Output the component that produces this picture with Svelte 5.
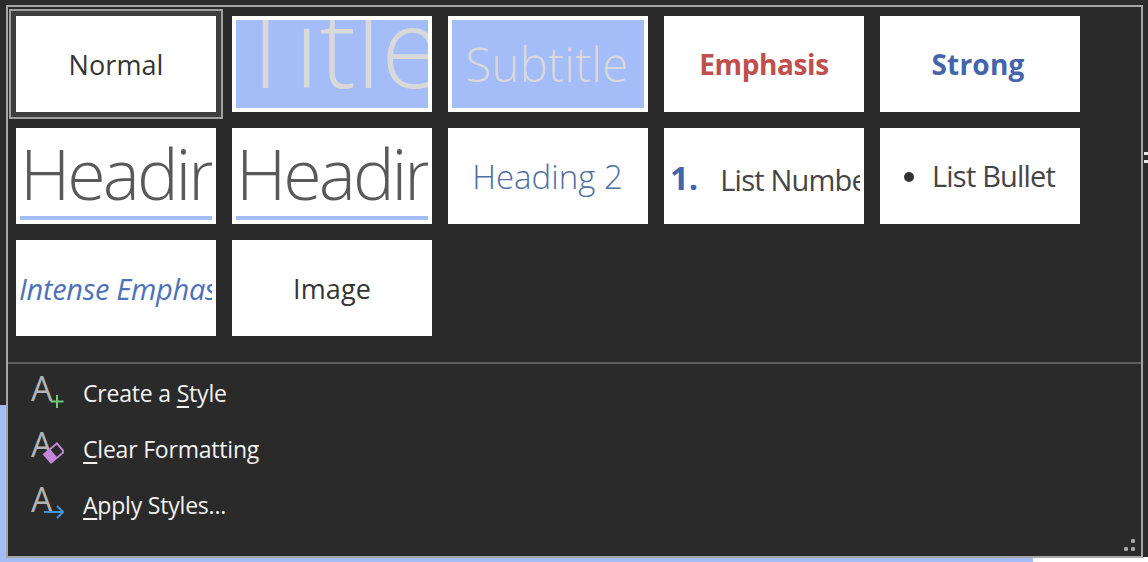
<script>
  const actions = [
    { before: 'Create a ', key: 'S', after: 'tyle', icon: 'add' },
    { before: '', key: 'C', after: 'lear Formatting', icon: 'clear' },
    { before: '', key: 'A', after: 'pply Styles...', icon: 'apply' }
  ];
</script>

<div class="page">
  <div class="panel">
    <div class="gallery">
      <div class="tile selected"><span class="normal">Normal</span></div>
      <div class="tile shaded"><div class="fill"><span class="title">Title</span></div></div>
      <div class="tile shaded"><div class="fill"><span class="subtitle">Subtitle</span></div></div>
      <div class="tile"><span class="emphasis">Emphasis</span></div>
      <div class="tile"><span class="strong">Strong</span></div>

      <div class="tile ruled"><div class="clip"><span class="heading">Heading 1</span></div></div>
      <div class="tile ruled"><div class="clip"><span class="heading">Heading 1</span></div></div>
      <div class="tile"><span class="heading2">Heading 2</span></div>
      <div class="tile left"><div class="clip row"><b class="num">1.</b><span class="item">List Number</span></div></div>
      <div class="tile left"><div class="clip row bullets"><i class="dot"></i><span class="item">List Bullet</span></div></div>

      <div class="tile left"><div class="clip row"><span class="intense">Intense Emphasis</span></div></div>
      <div class="tile"><span class="normal">Image</span></div>
    </div>

    <div class="rule"></div>

    <ul class="menu">
      {#each actions as action}
        <li>
          <svg width="40" height="40" viewBox="0 0 40 40" aria-hidden="true">
            <text x="7" y={action.icon === 'apply' ? 27 : 28} class="glyph">A</text>
            {#if action.icon === 'add'}
              <path d="M33 22v13M26.500 28.500h13" stroke="#6fc978" stroke-width="2" fill="none" />
            {:else if action.icon === 'clear'}
              <g transform="rotate(-40 30 24)">
                <rect x="21.500" y="18.500" width="17" height="11" fill="#2a2a2a" stroke="#c586d6" stroke-width="2" />
                <rect x="21.500" y="18.500" width="8" height="11" fill="#c586d6" />
              </g>
            {:else}
              <path d="M20 27h19M33 21l6 6-6 6" stroke="#3f93d8" stroke-width="2" fill="none" />
            {/if}
          </svg>
          <span class="label">{action.before}<u>{action.key}</u>{action.after}</span>
        </li>
      {/each}
    </ul>

    <div class="grip"><i></i><i></i><i></i></div>
  </div>
</div>

<style>
  :global(body) {
    margin: 0;
    background: #2b2b2b;
    overflow: hidden;
  }

  .page {
    box-sizing: border-box;
    width: 1148px;
    height: 562px;
    padding: 5px 5px 4px 6px;
    background:
      linear-gradient(#a4bcf8, #a4bcf8) left bottom / 1033px 5px no-repeat,
      linear-gradient(#ffffff, #ffffff) right bottom / 115px 5px no-repeat,
      linear-gradient(#a4bcf8, #a4bcf8) left bottom / 6px 157px no-repeat,
      linear-gradient(#e8e8e8, #e8e8e8) right 0 top 152px / 4px 3px no-repeat,
      linear-gradient(#e8e8e8, #e8e8e8) right 0 top 160px / 4px 3px no-repeat,
      #2b2b2b;
    font-family: "Open Sans", "Noto Sans", sans-serif;
  }

  .panel {
    position: relative;
    box-sizing: border-box;
    height: 553px;
    background: #2a2a2a;
    border: 2px solid #a6a6a6;
  }

  .gallery {
    display: grid;
    grid-template-columns: repeat(5, 200px);
    grid-auto-rows: 96px;
    gap: 16px;
    padding: 9px 0 0 8px;
  }

  .tile {
    box-sizing: border-box;
    position: relative;
    display: flex;
    align-items: center;
    justify-content: center;
    background: #fff;
    overflow: hidden;
    color: #333;
    white-space: nowrap;
  }

  .selected {
    box-shadow: 0 0 0 5px #3e3e3e, 0 0 0 7px #a0a0a0;
  }

  .shaded {
    padding: 4px;
  }

  .fill {
    flex: 1;
    height: 100%;
    background: #a4bcf8;
    overflow: hidden;
    display: flex;
    align-items: center;
    justify-content: center;
  }

  .normal {
    font-size: 27px;
    color: #353535;
    letter-spacing: 0.1px;
  }

  .title {
    font-size: 110px;
    font-weight: 300;
    color: #d9d9d9;
    line-height: 110px;
    margin: -38px 0 0 14px;
  }

  .subtitle {
    font-size: 47px;
    font-weight: 300;
    color: #d9d9d9;
    letter-spacing: 0.4px;
    margin-left: -2px;
  }

  .emphasis {
    font-size: 28px;
    font-weight: 700;
    color: #c0504d;
    letter-spacing: -0.4px;
  }

  .strong {
    font-size: 28px;
    font-weight: 700;
    color: #4465ab;
    letter-spacing: 0.2px;
    margin-left: -4px;
  }

  .ruled {
    padding: 4px;
    align-items: flex-start;
    justify-content: flex-start;
  }

  .ruled::after {
    content: "";
    position: absolute;
    left: 4px;
    right: 4px;
    bottom: 4px;
    height: 4px;
    background: #a4bcf8;
  }

  .clip {
    flex: 1;
    overflow: hidden;
    min-width: 0;
  }

  .heading {
    display: block;
    font-size: 70px;
    font-weight: 300;
    line-height: 82px;
    color: #595959;
    letter-spacing: -3px;
  }

  .heading2 {
    font-size: 33px;
    font-weight: 300;
    color: #4f6f9f;
    padding-top: 1px;
    margin-left: -1px;
  }

  .left {
    justify-content: flex-start;
    padding: 0 4px;
  }

  .row {
    display: flex;
    align-items: center;
    height: 48px;
  }

  .num {
    font-size: 33px;
    font-weight: 700;
    color: #4465ab;
    margin: 2px 22px 0 2px;
  }

  .item {
    font-size: 29px;
    color: #454545;
    letter-spacing: -0.8px;
    padding-top: 6px;
  }

  .bullets {
    padding-left: 20px;
    margin-top: -2px;
  }

  .bullets .item {
    padding-top: 0;
  }

  .dot {
    width: 10px;
    height: 10px;
    margin: 4px 18px 0 0;
    border-radius: 50%;
    background: #333;
  }

  .intense {
    font-size: 29px;
    font-style: italic;
    color: #4f71b8;
    letter-spacing: -0.3px;
    margin-left: -1px;
  }

  .rule {
    height: 2px;
    margin-top: 26px;
    background: #5e5e5e;
  }

  .menu {
    list-style: none;
    margin: 1px 0 0;
    padding: 0;
  }

  .menu li {
    display: flex;
    align-items: center;
    height: 56px;
    padding-left: 16px;
  }

  .glyph {
    font-family: "Open Sans", sans-serif;
    font-weight: 400;
    font-size: 34px;
    fill: #b4b4b4;
  }

  .label {
    margin-left: 19px;
    font-size: 23px;
    color: #f2f2f2;
    letter-spacing: -0.2px;
    white-space: nowrap;
  }

  .label u {
    text-underline-offset: 4px;
  }

  .grip {
    position: absolute;
    right: 6px;
    bottom: 5px;
    display: grid;
    grid-template-columns: 4px 4px;
    grid-auto-rows: 4px;
    gap: 4px 3px;
  }

  .grip i {
    background: #a6a6a6;
    border-radius: 1px;
  }

  .grip i:first-child {
    grid-column: 2;
  }
</style>
